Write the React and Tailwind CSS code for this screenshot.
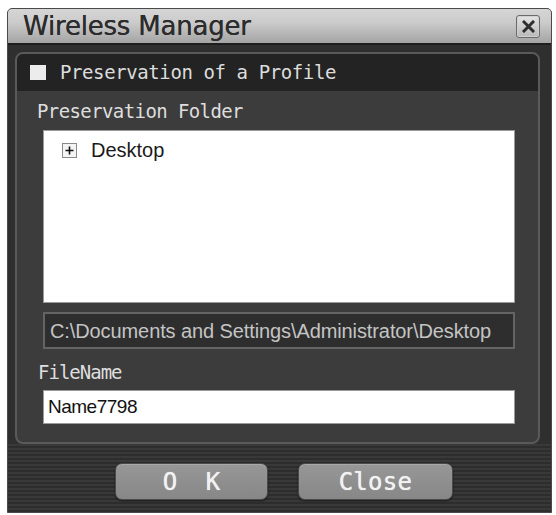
import React from "react";

const mono = "font-['DejaVu_Sans_Mono',monospace]";
const sans = "font-['Liberation_Sans',Arial,sans-serif]";

function CloseBox() {
  return (
    <button
      type="button"
      className="flex h-[23px] w-[24px] items-center justify-center rounded-[3px] border border-[#6a6a6a] bg-[linear-gradient(180deg,#e4e4e4_0%,#b8b8b8_100%)] shadow-[inset_0_0_0_1px_#d0d0d0]"
    >
      <svg width="13" height="13" viewBox="0 0 13 13">
        <path d="M2 2 L11 11 M11 2 L2 11" stroke="#2e2e2e" strokeWidth="3" strokeLinecap="square" />
      </svg>
    </button>
  );
}

function PlusBox() {
  return (
    <span className="flex h-[15px] w-[15px] items-center justify-center border border-[#8a8a8a] bg-[#f4f4f4]">
      <svg width="9" height="9" viewBox="0 0 9 9">
        <path d="M0.5 4.5 H8.5 M4.5 0.5 V8.5" stroke="#111" strokeWidth="1.6" />
      </svg>
    </span>
  );
}

function DialogButton({ children, wide }) {
  return (
    <button
      type="button"
      className={`flex h-[37px] items-center justify-center rounded-[7px] border border-[#4a4a4a] bg-[linear-gradient(180deg,#979797_0%,#878787_100%)] shadow-[inset_0_1px_0_#a8a8a8,0_1px_2px_#1a1a1a] text-[24px] text-[#f2f2f2] [text-shadow:0_0_0.8px_#f2f2f2] ${mono} ${wide}`}
    >
      {children}
    </button>
  );
}

export default function App() {
  return (
    <div className="h-[515px] w-[556px] bg-white pl-[7px] pt-[8px]">
      <div className="flex h-[505px] w-[545px] flex-col overflow-hidden rounded-t-[5px] border border-[#4a4a4a] bg-[#2f2f2f]">
        {/* title bar */}
        <div className="flex h-[36px] shrink-0 items-center justify-between border-b-2 border-[#1e1e1e] bg-[linear-gradient(180deg,#d6d6d6_0%,#cbcbcb_40%,#b4b4b4_75%,#a4a4a4_100%)] pl-[15px] pr-[11px]">
          <span className="font-['DejaVu_Sans',sans-serif] text-[26px] leading-none tracking-[-0.2px] text-[#2c2c2c] [text-shadow:0_0_0.6px_#2c2c2c]">
            Wireless Manager
          </span>
          <CloseBox />
        </div>

        {/* profile panel */}
        <div className="ml-[7px] mr-[11px] mt-[7px] flex h-[392px] flex-col overflow-hidden rounded-[8px] border-2 border-[#5a5a5a] bg-[#3c3c3c]">
          <div className="flex h-[37px] shrink-0 items-center gap-[14px] bg-[#232323] pl-[13px]">
            <span className="h-[15px] w-[16px] bg-[#ececec]" />
            <span className={`text-[19px] tracking-[-0.4px] text-[#dcdcdc] ${mono}`}>
              Preservation of a Profile
            </span>
          </div>

          <div className="flex flex-1 flex-col pl-[26px] pr-[23px]">
            <div className={`-ml-[6px] mt-[6px] h-[33px] text-[19px] tracking-[-0.6px] text-[#dedede] ${mono}`}>
              Preservation Folder
            </div>
            <div className="h-[173px] border border-[#9a9a9a] bg-white">
              <div className="mt-[4px] flex items-center gap-[14px] pl-[18px]">
                <PlusBox />
                <span className={`text-[20px] text-[#1a1a1a] ${sans}`}>Desktop</span>
              </div>
            </div>
            <div
              className={`mt-[9px] flex h-[37px] items-center border-2 border-[#646464] bg-[#2e2e2e] pl-[5px] text-[20px] tracking-[-0.1px] text-[#c4c4c4] ${sans}`}
            >
              C:\Documents and Settings\Administrator\Desktop
            </div>
            <div className={`-ml-[5px] mt-[9px] h-[32px] text-[19px] tracking-[-1px] text-[#dedede] ${mono}`}>
              FileName
            </div>
            <div className={`flex h-[34px] items-center border border-[#9a9a9a] bg-white pl-[4px] text-[19px] tracking-[-0.5px] text-[#111] ${sans}`}>
              Name7798
            </div>
          </div>
        </div>

        {/* button strip */}
        <div className="flex flex-1 items-start gap-[30px] bg-[repeating-linear-gradient(180deg,#393939_0px,#393939_2px,#2d2d2d_2px,#2d2d2d_4px)] pl-[107px] pt-[19px]">
          <DialogButton wide="w-[153px] tracking-[7px] pl-[7px]">O K</DialogButton>
          <DialogButton wide="w-[155px] tracking-[0.3px]">Close</DialogButton>
        </div>
      </div>
    </div>
  );
}
